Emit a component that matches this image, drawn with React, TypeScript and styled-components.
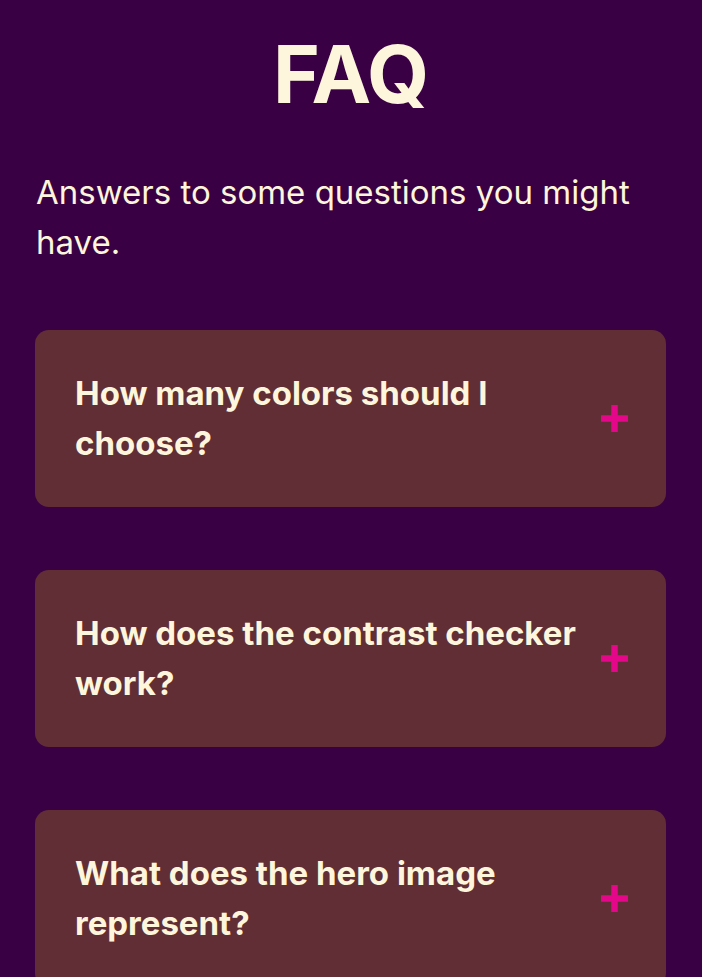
import React from "react";
import styled, { createGlobalStyle } from "styled-components";

const Global = createGlobalStyle`
  html, body { margin: 0; padding: 0; background: #3a0044; }
  body { font-family: Inter, "Noto Sans", sans-serif; }
`;

const Page = styled.main`
  background: #3a0044;
  min-height: 977px;
  padding: 25px 36px 0 35px;
  box-sizing: border-box;
  color: #fdf6dc;
`;

const Title = styled.h1`
  margin: 0;
  text-align: center;
  font-size: 80px;
  font-weight: 700;
  line-height: 1.23;
  letter-spacing: -1px;
`;

const Intro = styled.p`
  margin: 44px 0 0 1px;
  font-size: 33px;
  line-height: 50px;
  font-weight: 400;
`;

const List = styled.div`
  display: flex;
  flex-direction: column;
  gap: 63px;
  margin-top: 63px;
`;

const Card = styled.div`
  background: #612e35;
  border-radius: 14px;
  padding: 38px 37px 39px 40px;
  display: flex;
  align-items: center;
  justify-content: space-between;
  gap: 12px;
`;

const Question = styled.h2`
  margin: 0;
  font-size: 33px;
  line-height: 50px;
  font-weight: 700;
`;

const Plus = styled.svg`
  flex: none;
  width: 29px;
  height: 29px;
`;

const questions = [
  "How many colors should I choose?",
  "How does the contrast checker work?",
  "What does the hero image represent?",
];

export default function App() {
  return (
    <>
      <Global />
      <Page>
        <Title>FAQ</Title>
        <Intro>Answers to some questions you might have.</Intro>
        <List>
          {questions.map((q) => (
            <Card key={q}>
              <Question>{q}</Question>
              <Plus viewBox="0 0 29 29">
                <rect x="11.25" y="1" width="6.5" height="27" rx="0.5" fill="#e4078a" />
                <rect x="1" y="11.25" width="27" height="6.5" rx="0.5" fill="#e4078a" />
              </Plus>
            </Card>
          ))}
        </List>
      </Page>
    </>
  );
}
